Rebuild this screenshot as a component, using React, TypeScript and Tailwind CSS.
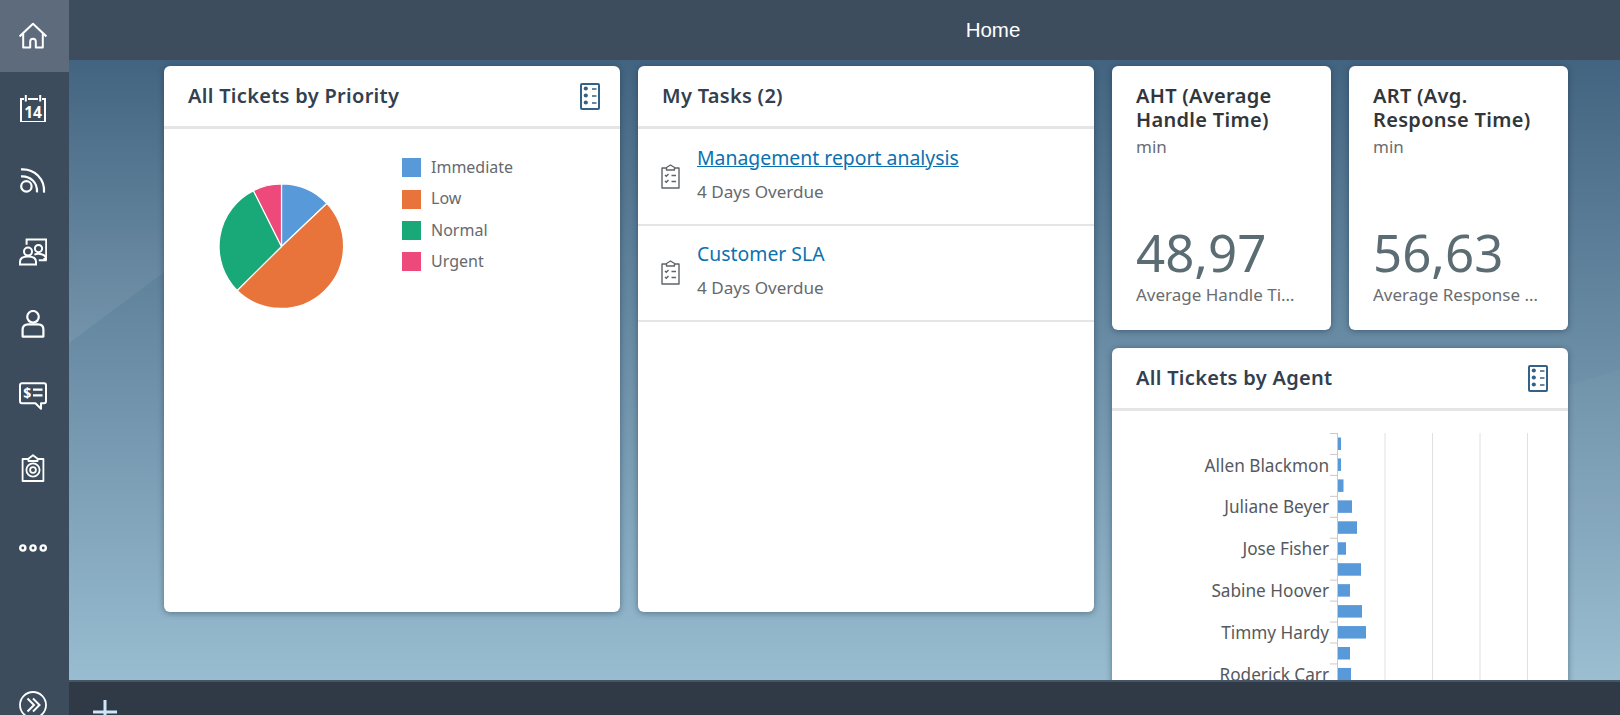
import type { ReactNode } from 'react'

// --- Iconos de la barra lateral ---

function IconoBase({ children, className = '' }: { children: ReactNode; className?: string }) {
  return (
    <svg viewBox="0 0 28 28" className={`h-7 w-7 ${className}`} fill="none" stroke="currentColor" strokeWidth="2">
      {children}
    </svg>
  )
}

const iconosMenu: ReactNode[] = [
  <IconoBase key="home">
    <path d="M0.6 14.4 14 1.8l13.4 12.6M4.2 11.6V25.6h7V19.6a2.8 2.8 0 0 1 5.6 0v6h7V11.6" strokeLinejoin="round" />
  </IconoBase>,
  <IconoBase key="calendar">
    <path d="M5 5H2v23h24V5h-3M9 5h10M6.8 1v6.5M21.2 1v6.5" />
    <text x="14" y="23.8" textAnchor="middle" fontSize="15.5" fontWeight="700" fill="currentColor" stroke="none" fontFamily="'Noto Sans', sans-serif">14</text>
  </IconoBase>,
  <IconoBase key="rss">
    <circle cx="7.4" cy="20.4" r="5.2" strokeWidth="2.2" />
    <path d="M2 10.4c9.6-.6 16.6 6.4 16 16M2 3.4C15.4 2.4 26 13 25 26.6" strokeWidth="2.2" />
  </IconoBase>,
  <IconoBase key="people">
    <path d="M7.6 6.8V1.4h19.6v19.6h-2.8" />
    <circle cx="9" cy="13.6" r="4" />
    <circle cx="19.5" cy="10.6" r="3.6" />
    <path d="M1 26.6v-2.8c0-3.4 3-5.4 8-5.4s8 2 8 5.4v2.8ZM15.4 16.6c4-1.6 11-.6 11.4 3.4v2.2h-7" />
  </IconoBase>,
  <IconoBase key="user">
    <circle cx="14" cy="6.8" r="5.8" strokeWidth="2.2" />
    <path d="M3.6 26.6v-7c0-3.5 2.4-5.2 5.4-5.2h10c3 0 5.4 1.7 5.4 5.2v7Z" strokeWidth="2.2" strokeLinejoin="round" />
  </IconoBase>,
  <IconoBase key="chat">
    <path d="M3 1.2h22A2 2 0 0 1 27 3.2v16a2 2 0 0 1-2 2h-3v5.6l-5.6-5.6H3a2 2 0 0 1-2-2v-16a2 2 0 0 1 2-2Z" strokeLinejoin="round" />
    <text x="8.2" y="16" textAnchor="middle" fontSize="14" fontWeight="700" fill="currentColor" stroke="none" fontFamily="'Noto Sans', sans-serif">$</text>
    <path d="M14 7.6h9.5M14 13.4h9.5" strokeWidth="2.2" />
  </IconoBase>,
  <IconoBase key="clipboard">
    <path d="M9 5H3.6v22h20.8V5H19M9.4 7h9.2V4.8L14 1.2 9.4 4.8Z" strokeLinejoin="round" strokeWidth="1.8" />
    <circle cx="14" cy="16" r="6.6" strokeWidth="1.8" />
    <circle cx="14" cy="16" r="2.9" strokeWidth="1.8" />
  </IconoBase>,
  <IconoBase key="more" className="translate-y-2">
    <circle cx="3.8" cy="14" r="2.6" strokeWidth="2.4" />
    <circle cx="14" cy="14" r="2.6" strokeWidth="2.4" />
    <circle cx="24.2" cy="14" r="2.6" strokeWidth="2.4" />
  </IconoBase>,
]

/** Icono de lista con tres viñetas de las cabeceras */
function IconoLista() {
  return (
    <svg viewBox="0 0 20 27" className="h-[27px] w-5 text-[#346187]" fill="none" stroke="currentColor">
      <rect x="1" y="1" width="18" height="25" rx="1" strokeWidth="2" />
      <circle cx="5.8" cy="5.5" r="2.1" fill="currentColor" stroke="none" />
      <circle cx="5.8" cy="12.5" r="2.1" fill="currentColor" stroke="none" />
      <circle cx="5.8" cy="19.5" r="2.1" fill="currentColor" stroke="none" />
      <path d="M12 6h4.5M12 13h4.5M12 20h4.5" strokeWidth="1.7" />
    </svg>
  )
}

function IconoTarea() {
  return (
    <svg viewBox="0 0 19 25" className="h-[25px] w-[19px] shrink-0 text-[#5f6468]" fill="none" stroke="currentColor" strokeWidth="1.4">
      <path d="M5.5 4H1v20h17V4h-4.5M5.5 6h8V3.5L9.5 1 5.5 3.5Z" strokeLinejoin="round" />
      <path d="M4 11l1.3 1.3L7.5 10M4 17l1.3 1.3L7.5 16M10.5 11.5H15M10.5 17.5H15" />
    </svg>
  )
}

// --- Graficos ---

function TartaPrioridad() {
  const sectores = [
    { color: '#5899da', d: 'M62 62V0A62 62 0 0 1 107 19.3Z' },
    { color: '#e8743b', d: 'M62 62 107 19.3A62 62 0 0 1 18 105.6Z' },
    { color: '#19a979', d: 'M62 62 18 105.6A62 62 0 0 1 34.2 6.6Z' },
    { color: '#ed4a7b', d: 'M62 62 34.2 6.6A62 62 0 0 1 62 0Z' },
  ]
  return (
    <svg viewBox="0 0 124 124" className="h-[125px] w-[125px] shrink-0">
      {sectores.map((s) => (
        <path key={s.color} d={s.d} fill={s.color} stroke="#fff" strokeWidth="1.2" strokeLinejoin="round" />
      ))}
    </svg>
  )
}

const barrasAgente = [3, 3, 5.5, 14, 19, 8, 23, 12, 24, 28, 12, 13]
const nombresAgente = ['Allen Blackmon', 'Juliane Beyer', 'Jose Fisher', 'Sabine Hoover', 'Timmy Hardy', 'Roderick Carr']

function BarrasAgente() {
  return (
    <svg viewBox="0 0 456 270" className="h-[270px] w-[456px] shrink-0" style={{ fontFamily: "'Noto Sans', sans-serif" }}>
      {[273, 320.5, 368, 415.5].map((x) => (
        <line key={x} x1={x} x2={x} y1="22" y2="270" stroke="#e0e0e0" strokeWidth="1" />
      ))}
      <line x1="225.5" x2="225.5" y1="22" y2="270" stroke="#c9c9c9" />
      {barrasAgente.map((ancho, i) => (
        <g key={i}>
          <line x1="218" x2="226" y1={22.5 + i * 20.95} y2={22.5 + i * 20.95} stroke="#c9c9c9" />
          <rect x="226" y={26.5 + i * 20.95} width={ancho} height="12.5" fill="#5899da" />
        </g>
      ))}
      {nombresAgente.map((nombre, i) => (
        <text key={nombre} x="217" y={60.5 + i * 41.9} textAnchor="end" fontSize="17.2" fill="#55595d">
          {nombre}
        </text>
      ))}
    </svg>
  )
}

// --- Tarjetas ---

function Tarjeta({ children, className = '' }: { children: ReactNode; className?: string }) {
  return (
    <div className={`overflow-hidden rounded-[6px] bg-white shadow-[0_1px_6px_rgba(20,40,60,0.45)] ${className}`}>{children}</div>
  )
}

function Cabecera({ titulo, lista }: { titulo: string; lista?: boolean }) {
  return (
    <div className="flex h-[63px] items-center justify-between border-b-[3px] border-[#e5e5e5] pr-5 pl-6">
      <span className="text-[20px] font-semibold tracking-[0.3px] text-[#32404f]">{titulo}</span>
      {lista && <IconoLista />}
    </div>
  )
}

function FilaTarea({ titulo, activa }: { titulo: string; activa?: boolean }) {
  return (
    <div className="flex h-[96.5px] items-center border-b-2 border-[#e5e5e5] pl-[23px]">
      <IconoTarea />
      <div className="ml-[17px] flex flex-col gap-2 pb-1">
        <span className={`text-[19.4px] leading-[27px] text-[#0a72b1] ${activa ? 'underline' : ''}`}>{titulo}</span>
        <span className="text-[17.1px] leading-[26px] text-[#666a6e]">4 Days Overdue</span>
      </div>
    </div>
  )
}

function TarjetaKpi({ titulo, valor, pie }: { titulo: ReactNode; valor: string; pie: string }) {
  return (
    <Tarjeta className="flex h-[264px] w-[219px] flex-col px-6 pt-[18px]">
      <div className="text-[20px] leading-[24px] font-semibold tracking-[0.3px] text-[#32363a]">{titulo}</div>
      <div className="mt-[3px] text-[17px] leading-[24px] text-[#6a6d70]">min</div>
      <div className="mt-[62px] text-[51px] leading-[62px] font-normal text-[#5b6c73]">{valor}</div>
      <div className="truncate pr-[3px] text-[17px] leading-[24px] text-[#6a6d70]">{pie}</div>
    </Tarjeta>
  )
}

export default function App() {
  return (
    <div className="flex h-[715px] w-[1620px] overflow-hidden font-['Noto_Sans',sans-serif]">
      {/* Barra lateral */}
      <nav className="flex w-[69px] shrink-0 flex-col bg-[#3d4c5c] text-white">
        {iconosMenu.map((icono, i) => (
          <div key={i} className={`flex h-[72px] items-center justify-center pr-[3px] ${i === 0 ? 'bg-[#5d6b7c]' : ''}`}>
            {icono}
          </div>
        ))}
        <div className="mt-auto flex h-[35px] justify-center overflow-hidden pt-[11px] pr-[3px]">
          <svg viewBox="0 0 28 28" className="h-7 w-7 shrink-0" fill="none" stroke="currentColor" strokeWidth="1.8">
            <circle cx="14" cy="14" r="13" />
            <path d="M8.5 7.5 15 14l-6.5 6.5M14 7.5 20.5 14 14 20.5" strokeWidth="2" />
          </svg>
        </div>
      </nav>

      <div className="flex min-w-0 flex-1 flex-col">
        <header className="flex h-[60px] shrink-0 items-center justify-center bg-[#3e4d5e] pl-[297px] font-['Liberation_Sans',sans-serif] text-[20.5px] text-white">
          Home
        </header>

        <main className="relative flex min-h-0 flex-1 items-start gap-[18px] overflow-hidden bg-gradient-to-b from-[#436480] via-[#6d90a8] to-[#98bcd0] pt-1.5 pl-[95px]">
          {/* Planos claros del fondo */}
          <svg className="absolute inset-0 h-full w-full" viewBox="0 0 1551 620" preserveAspectRatio="none">
            <defs>
              <linearGradient id="plano" x1="0" y1="0" x2="0" y2="1">
                <stop offset="0" stopColor="#fff" stopOpacity="0" />
                <stop offset="1" stopColor="#fff" stopOpacity="0.07" />
              </linearGradient>
            </defs>
            <polygon points="0,0 380,0 0,283" fill="url(#plano)" />
            <polygon points="1499,325 1551,310 1551,620 1499,620" fill="#fff" opacity="0.03" />
          </svg>

          <Tarjeta className="relative h-[546px] w-[456px] shrink-0">
            <Cabecera titulo="All Tickets by Priority" lista />
            <div className="flex items-start pl-[55px]">
              <div className="mt-[55px]">
                <TartaPrioridad />
              </div>
              <ul className="mt-[23px] ml-[58px] flex flex-col text-[16px] leading-[31.4px] text-[#666a6e]">
                {[
                  ['Immediate', 'bg-[#5899da]'],
                  ['Low', 'bg-[#e8743b]'],
                  ['Normal', 'bg-[#19a979]'],
                  ['Urgent', 'bg-[#ed4a7b]'],
                ].map(([nombre, color]) => (
                  <li key={nombre} className="flex items-center gap-2.5">
                    <span className={`h-[19px] w-[19px] ${color}`} />
                    {nombre}
                  </li>
                ))}
              </ul>
            </div>
          </Tarjeta>

          <Tarjeta className="relative h-[546px] w-[456px] shrink-0">
            <Cabecera titulo="My Tasks (2)" />
            <FilaTarea titulo="Management report analysis" activa />
            <FilaTarea titulo="Customer SLA" />
          </Tarjeta>

          <div className="relative flex w-[456px] shrink-0 flex-col gap-[18px]">
            <div className="flex gap-[18px]">
              <TarjetaKpi
                titulo={<>AHT (Average<br />Handle Time)</>}
                valor="48,97"
                pie="Average Handle Time"
              />
              <TarjetaKpi
                titulo={<>ART (Avg.<br />Response Time)</>}
                valor="56,63"
                pie="Average Response Time"
              />
            </div>
            <Tarjeta className="h-[500px]">
              <Cabecera titulo="All Tickets by Agent" lista />
              <BarrasAgente />
            </Tarjeta>
          </div>
        </main>

        <footer className="relative h-[35px] shrink-0 overflow-hidden border-t-2 border-[#465666] bg-[#2f3a46] pt-[18px] pl-6">
          <svg viewBox="0 0 24 24" className="h-6 w-6 text-[#cfe6fa]" fill="none" stroke="currentColor" strokeWidth="3">
            <path d="M12 0v24M0 12h24" />
          </svg>
        </footer>
      </div>
    </div>
  )
}
